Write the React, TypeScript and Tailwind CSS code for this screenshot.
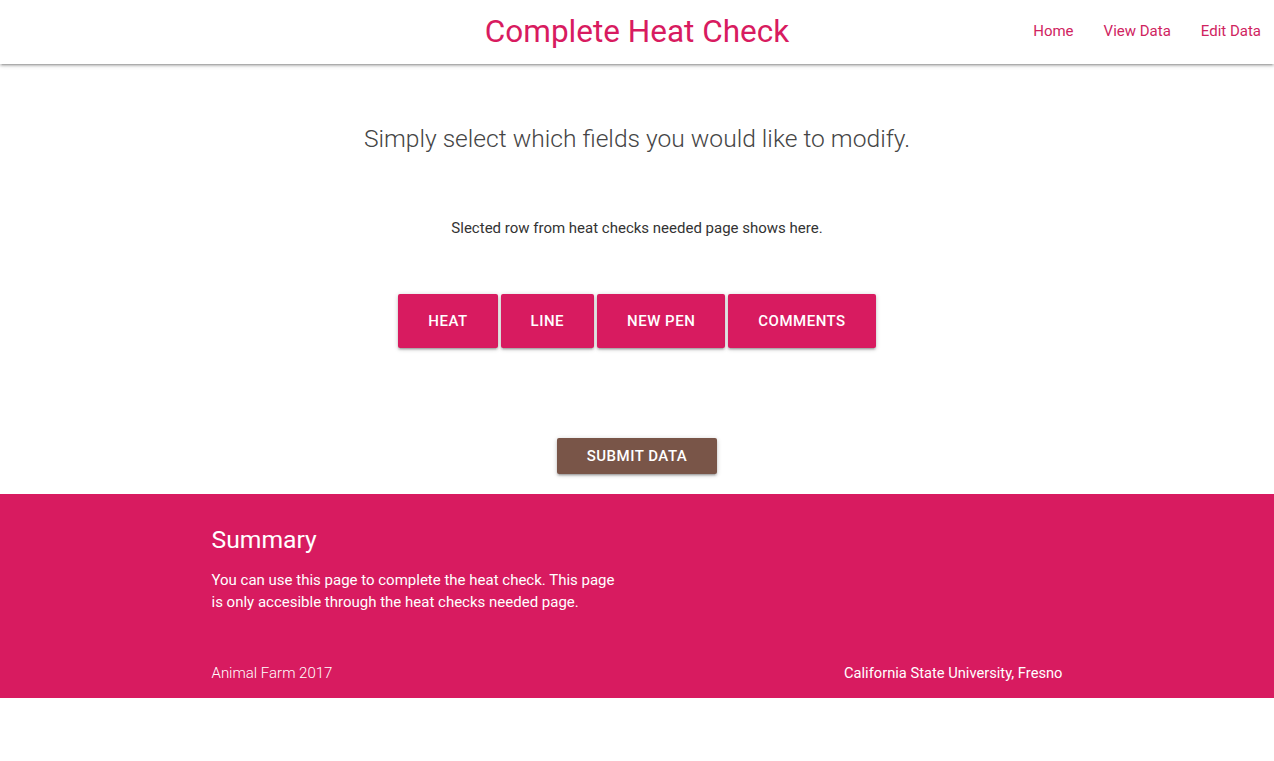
const App = () => {
  const fields = ["Heat", "Line", "New Pen", "Comments"];
  const links = ["Home", "View Data", "Edit Data"];

  return (
    <div className="min-h-screen bg-white font-['Roboto',sans-serif]">
      <nav className="relative flex h-16 items-center justify-center bg-white shadow-[0_2px_2px_0_rgba(0,0,0,0.14),0_3px_1px_-2px_rgba(0,0,0,0.12),0_1px_5px_0_rgba(0,0,0,0.2)]">
        <div className="text-[31.5px] text-[#d81b60]">Complete Heat Check</div>
        <ul className="absolute right-0 top-0 flex h-16 items-center pb-[2px]">
          {links.map((link) => (
            <li key={link} className="px-[15px] text-[15px] text-[#d0245f] last:pr-[13px]">
              {link}
            </li>
          ))}
        </ul>
      </nav>

      <main className="flex flex-col items-center">
        <h5 className="mt-[57px] text-[24.6px] font-light text-[#454545]">
          Simply select which fields you would like to modify.
        </h5>
        <p className="mt-[59px] text-[15px] text-[#333]">
          Slected row from heat checks needed page shows here.
        </p>
        <div className="mt-[55px] flex gap-[3px]">
          {fields.map((f) => (
            <button
              key={f}
              className="h-[54px] rounded-[2px] bg-[#d81b60] px-[30px] text-[15px] font-medium uppercase tracking-[0.5px] text-white shadow-[0_2px_2px_0_rgba(0,0,0,0.14),0_3px_1px_-2px_rgba(0,0,0,0.12),0_1px_5px_0_rgba(0,0,0,0.2)]"
            >
              {f}
            </button>
          ))}
        </div>
        <button className="mt-[90px] h-9 w-40 rounded-[2px] bg-[#795548] text-[15px] font-medium uppercase tracking-[0.5px] text-white shadow-[0_2px_2px_0_rgba(0,0,0,0.14),0_3px_1px_-2px_rgba(0,0,0,0.12),0_1px_5px_0_rgba(0,0,0,0.2)]">
          Submit Data
        </button>
      </main>

      <footer className="mt-5 bg-[#d81b60] text-white">
        <div className="mx-auto w-[851px] pt-[30px]">
          <h5 className="text-[24.7px] leading-[32px]">Summary</h5>
          <p className="mt-[13px] w-[410px] text-[15px] leading-[22px]">
            You can use this page to complete the heat check. This page is only
            accesible through the heat checks needed page.
          </p>
        </div>
        <div className="mx-auto mt-[34px] flex h-[51px] w-[851px] items-center justify-between text-[15px]">
          <span className="font-light">Animal Farm 2017</span>
          <span className="text-[14.7px]">California State University, Fresno</span>
        </div>
      </footer>
    </div>
  );
};

export default App;
